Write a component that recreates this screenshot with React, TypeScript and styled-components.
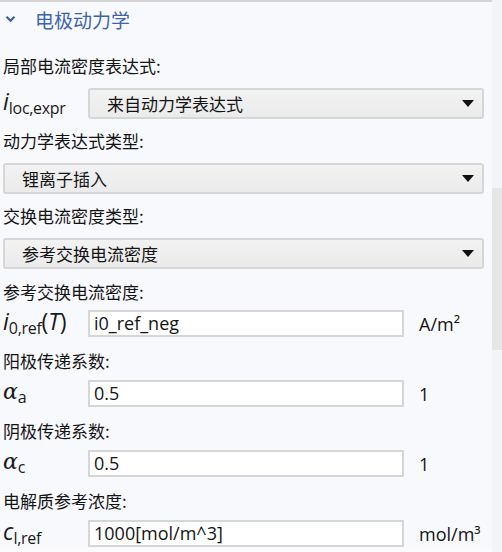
import React from "react";
import styled, { createGlobalStyle } from "styled-components";

const GlobalStyle = createGlobalStyle`
  html, body {
    margin: 0;
    padding: 0;
    background: #fbfbfd;
  }
  body {
    font-family: "Open Sans", "Noto Sans CJK SC", sans-serif;
  }
`;

const Page = styled.div`
  display: flex;
  width: 502px;
  height: 552px;
  overflow: hidden;
`;

const Panel = styled.div`
  width: 492px;
  height: 548px;
  background: #f8f9fd;
  border-top: 2px solid #d4d4d4;
  box-sizing: border-box;
`;

const Header = styled.div`
  height: 34px;
  display: flex;
  align-items: center;
  padding-left: 5px;
`;

const Title = styled.span`
  margin-left: 19px;
  font-family: "Noto Sans CJK SC", sans-serif;
  font-size: 19px;
  color: #3e63ad;
`;

const Body = styled.div`
  padding: 15px 8px 0 3px;
`;

const Label = styled.div`
  height: 30px;
  line-height: 30px;
  font-family: "Noto Sans CJK SC", sans-serif;
  font-size: 17px;
  color: #141414;
  white-space: nowrap;
`;

const Row = styled.div<{ $top: number; $bottom: number; $h: number }>`
  display: flex;
  align-items: center;
  height: ${(p) => p.$h}px;
  margin: ${(p) => p.$top}px 0 ${(p) => p.$bottom}px;
`;

const Symbol = styled.div`
  width: 85px;
  height: 27px;
  line-height: 27px;
  flex: none;
  color: #1a1a1a;
  white-space: nowrap;
`;

const Main = styled.span<{ $greek?: boolean }>`
  font-family: ${(p) => (p.$greek ? '"DejaVu Serif"' : '"Open Sans"')}, sans-serif;
  font-style: italic;
  font-size: ${(p) => (p.$greek ? 22 : 23)}px;
  line-height: 1;
`;

const Sub = styled.span`
  font-family: "Open Sans", sans-serif;
  font-size: 16px;
  line-height: 1;
  position: relative;
  top: 4px;
  letter-spacing: -0.3px;
`;

const Paren = styled.span`
  font-family: "Open Sans", sans-serif;
  font-size: 23px;
  line-height: 1;
`;

const Combo = styled.div`
  flex: 1;
  height: 31px;
  box-sizing: border-box;
  border: 2px solid #d6d6d6;
  border-radius: 3px;
  background: linear-gradient(#f2f2f2, #ebebeb);
  display: flex;
  align-items: center;
  justify-content: space-between;
  padding: 0 8px 0 17px;
  font-family: "Noto Sans CJK SC", sans-serif;
  font-size: 17px;
  color: #141414;
`;

const Arrow = styled.span`
  width: 0;
  height: 0;
  border-left: 6px solid transparent;
  border-right: 6px solid transparent;
  border-top: 7px solid #111;
`;

const Input = styled.div`
  width: 316px;
  height: 27px;
  flex: none;
  box-sizing: border-box;
  border: 2px solid #d6d6d6;
  background: #fff;
  padding-left: 4px;
  line-height: 23px;
  font-size: 18px;
  color: #141414;
`;

const Unit = styled.span`
  margin-left: 15px;
  font-size: 18px;
  color: #141414;
`;

const Scroll = styled.div`
  width: 10px;
  height: 552px;
  display: flex;
  flex-direction: column;
  background: #f3f4f7;
`;

const Thumb = styled.div`
  margin-top: 188px;
  height: 162px;
  background: #e6e6e6;
`;

const Chevron = () => (
  <svg width="11" height="8" viewBox="0 0 11 8">
    <path d="M1.5 1.8 L5.5 5.8 L9.5 1.8" fill="none" stroke="#3b5ea8" strokeWidth="2.2" />
  </svg>
);

const fields = [
  {
    label: "参考交换电流密度:",
    sym: (
      <>
        <Main>i</Main>
        <Sub>0,ref</Sub>
        <Paren>(</Paren>
        <Main>T</Main>
        <Paren>)</Paren>
      </>
    ),
    value: "i0_ref_neg",
    unit: "A/m²",
  },
  {
    label: "阳极传递系数:",
    sym: (
      <>
        <Main $greek>α</Main>
        <Sub>a</Sub>
      </>
    ),
    value: "0.5",
    unit: "1",
  },
  {
    label: "阴极传递系数:",
    sym: (
      <>
        <Main $greek>α</Main>
        <Sub>c</Sub>
      </>
    ),
    value: "0.5",
    unit: "1",
  },
  {
    label: "电解质参考浓度:",
    sym: (
      <>
        <Main>c</Main>
        <Sub>l,ref</Sub>
      </>
    ),
    value: "1000[mol/m^3]",
    unit: "mol/m³",
  },
];

export default function App() {
  return (
    <>
      <GlobalStyle />
      <Page>
        <Panel>
          <Header>
            <Chevron />
            <Title>电极动力学</Title>
          </Header>
          <Body>
            <Label>局部电流密度表达式:</Label>
            <Row $top={7} $bottom={7} $h={31}>
              <Symbol>
                <Main>i</Main>
                <Sub>loc,expr</Sub>
              </Symbol>
              <Combo>
                来自动力学表达式
                <Arrow />
              </Combo>
            </Row>
            <Label>动力学表达式类型:</Label>
            <Row $top={7} $bottom={7} $h={31}>
              <Combo>
                锂离子插入
                <Arrow />
              </Combo>
            </Row>
            <Label>交换电流密度类型:</Label>
            <Row $top={7} $bottom={8} $h={31}>
              <Combo>
                参考交换电流密度
                <Arrow />
              </Combo>
            </Row>
            {fields.map((f, i) => (
              <React.Fragment key={i}>
                <Label>{f.label}</Label>
                <Row $top={i === 0 ? 3 : 4} $bottom={i === fields.length - 1 ? 0 : 9} $h={27}>
                  <Symbol>{f.sym}</Symbol>
                  <Input>{f.value}</Input>
                  <Unit>{f.unit}</Unit>
                </Row>
              </React.Fragment>
            ))}
          </Body>
        </Panel>
        <Scroll>
          <Thumb />
        </Scroll>
      </Page>
    </>
  );
}
